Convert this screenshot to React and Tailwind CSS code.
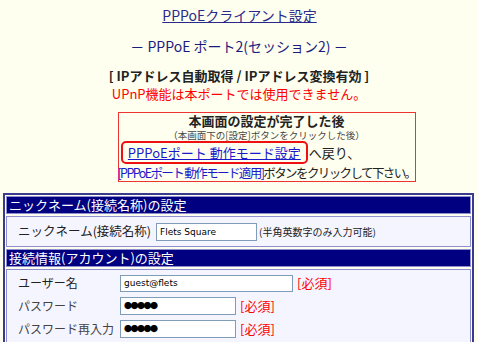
import React from "react";

const Required = () => (
  <span className="text-[13px] text-[#ff0000] ml-[4px]">[必須]</span>
);

const App = () => {
  return (
    <div className="w-[478px] h-[342px] overflow-hidden bg-[#fffff0] font-['Noto_Sans_CJK_JP',sans-serif] text-[#222222]">
      <div className="flex flex-col items-center pt-[5px]">
        <a href="#" className="text-[14px] leading-[20px] text-[#2a2a8a] underline ml-[1px]">
          PPPoEクライアント設定
        </a>
        <div className="mt-[11px] text-[14px] leading-[20px] text-[#1c1c80]">
          － PPPoE ポート2(セッション2) －
        </div>
        <div className="mt-[11px] text-[13px] leading-[18px] font-bold text-[#222222]">
          [ IPアドレス自動取得 / IPアドレス変換有効 ]
        </div>
        <div className="text-[13px] leading-[18px] text-[#ff0000]">
          UPnP機能は本ポートでは使用できません。
        </div>

        <div className="mt-[9px] ml-[55px] w-[298px] h-[70px] border border-[#ee3333] flex flex-col items-center">
          <div className="text-[13px] leading-[16px] font-bold">
            本画面の設定が完了した後
          </div>
          <div className="mt-[1px] text-[9.5px] leading-[11px] text-[#444444]">
            （本画面下の[設定]ボタンをクリックした後）
          </div>
          <div className="flex items-center text-[13px] leading-[17px] -ml-[52px] whitespace-nowrap">
            <a
              href="#"
              className="border-2 border-[#ee1111] rounded-[5px] px-[5px] py-[1px] text-[#1a1acc] underline"
            >
              PPPoEポート 動作モード設定
            </a>
            <span className="ml-[1px]">へ戻り、</span>
          </div>
          <div className="text-[12.5px] leading-[17px] tracking-[-1.6px] whitespace-nowrap">
            <span className="text-[#1a1acc]">[PPPoEポート 動作モード適用]</span>
            ボタンをクリックして下さい。
          </div>
        </div>
      </div>

      <div className="mt-[11px] ml-[3px] w-[471px] border-2 border-[#3a3a8f] p-[1px] flex flex-col gap-[2px]">
        <div className="h-[18px] bg-[#000080] border border-[#8f8fcf] text-white text-[13px] leading-[16px] px-[2px] whitespace-nowrap">
          ニックネーム(接続名称)の設定
        </div>
        <div className="h-[31px] bg-[#f5f5ff] border border-[#8f8fcf] flex items-center pl-[11px] whitespace-nowrap">
          <span className="text-[12.5px] w-[138px]">ニックネーム(接続名称)</span>
          <div className="w-[101px] h-[18px] border border-[#7f9db9] bg-white font-['DejaVu_Sans',sans-serif] text-[9px] leading-[16px] pl-[3px] text-black">
            Flets Square
          </div>
          <span className="ml-[2px] text-[10px]">(半角英数字のみ入力可能)</span>
        </div>
        <div className="h-[18px] bg-[#000080] border border-[#8f8fcf] text-white text-[13px] leading-[16px] px-[2px] whitespace-nowrap">
          接続情報(アカウント)の設定
        </div>
        <div className="h-[80px] bg-[#f5f5ff] border border-[#8f8fcf] pl-[11px] pt-[4px] flex flex-col gap-[5px] whitespace-nowrap">
          <div className="flex items-center h-[18px]">
            <span className="text-[12px] w-[102px]">ユーザー名</span>
            <div className="w-[173px] h-[17px] border border-[#7f9db9] bg-white font-['DejaVu_Sans',sans-serif] text-[9px] leading-[15px] pl-[3px] text-black">
              guest@flets
            </div>
            <Required />
          </div>
          <div className="flex items-center h-[18px]">
            <span className="text-[12px] w-[102px] text-[#444444]">パスワード</span>
            <div className="w-[116px] h-[18px] border border-[#7f9db9] bg-white text-[8px] leading-[16px] pl-[3px] text-black tracking-[-1.5px]">
              ●●●●●
            </div>
            <Required />
          </div>
          <div className="flex items-center h-[18px]">
            <span className="text-[12px] w-[102px] text-[#444444]">パスワード再入力</span>
            <div className="w-[116px] h-[18px] border border-[#7f9db9] bg-white text-[8px] leading-[16px] pl-[3px] text-black tracking-[-1.5px]">
              ●●●●●
            </div>
            <Required />
          </div>
        </div>
      </div>
    </div>
  );
};

export default App;
